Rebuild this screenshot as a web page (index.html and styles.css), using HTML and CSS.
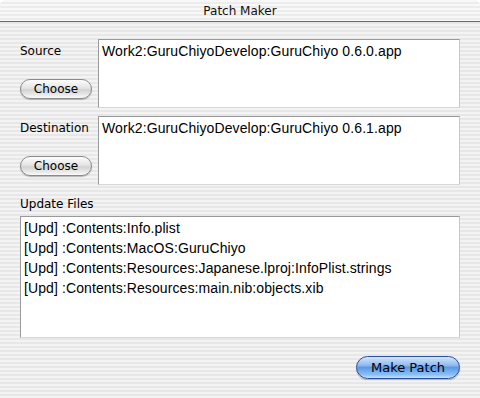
FILE: index.html
```html
<!DOCTYPE html>
<html lang="en">
<head>
    <meta charset="UTF-8">
    <title>Patch Maker</title>
    <link rel="stylesheet" href="styles.css">
</head>
<body>
    <div class="window">
        <div class="titlebar">Patch Maker</div>

        <div class="content">
            <div class="field-row">
                <div class="field-side">
                    <span class="field-label">Source</span>
                    <button class="aqua-button">Choose</button>
                </div>
                <div class="path-box">Work2:GuruChiyoDevelop:GuruChiyo 0.6.0.app</div>
            </div>

            <div class="field-row">
                <div class="field-side">
                    <span class="field-label">Destination</span>
                    <button class="aqua-button">Choose</button>
                </div>
                <div class="path-box">Work2:GuruChiyoDevelop:GuruChiyo 0.6.1.app</div>
            </div>

            <div class="section-label">Update Files</div>
            <ul class="file-list">
                <li>[Upd] :Contents:Info.plist</li>
                <li>[Upd] :Contents:MacOS:GuruChiyo</li>
                <li>[Upd] :Contents:Resources:Japanese.lproj:InfoPlist.strings</li>
                <li>[Upd] :Contents:Resources:main.nib:objects.xib</li>
            </ul>

            <div class="actions">
                <button class="aqua-button default">Make Patch</button>
            </div>
        </div>
    </div>
</body>
</html>
```

FILE: styles.css
```css
body {
    margin: 0;
    font-family: "DejaVu Sans", sans-serif;
    font-size: 12px;
    color: #000;
}

.window {
    width: 480px;
    height: 398px;
    background: repeating-linear-gradient(to bottom, #f3f3f3 0, #f3f3f3 2px, #e7e7e7 2px, #e7e7e7 4px);
    border-radius: 6px 6px 0 0;
    overflow: hidden;
}

.titlebar {
    height: 21px;
    line-height: 22px;
    text-align: center;
    color: #111;
    background: repeating-linear-gradient(to bottom, #f8f8f8 0, #f8f8f8 2px, #ececec 2px, #ececec 4px);
    border-bottom: 1px solid #6b6b6b;
}

.content {
    padding: 17px 20px 0 20px;
}

.field-row {
    display: grid;
    grid-template-columns: 78px 1fr;
    height: 69px;
    margin-bottom: 8px;
}

.field-side {
    display: flex;
    flex-direction: column;
    align-items: flex-start;
}

.field-label {
    margin-top: 5px;
    line-height: 15px;
}

.path-box {
    background: #fff;
    border: 1px solid #9a9a9a;
    border-right-color: #c8c8c8;
    border-bottom-color: #d8d8d8;
    padding: 2px 3px;
    font-family: "Liberation Sans", Arial, sans-serif;
    font-size: 14px;
    line-height: 18px;
    letter-spacing: 0.1px;
}

.aqua-button {
    font-family: "DejaVu Sans", sans-serif;
    font-size: 12px;
    color: #000;
    height: 20px;
    width: 72px;
    padding: 0;
    margin-top: 20px;
    border: 1px solid #8a8a8a;
    border-radius: 10px;
    background: linear-gradient(to bottom, #fdfdfd 0%, #e4e4e4 45%, #d2d2d2 55%, #f0f0f0 90%, #fafafa 100%);
    box-shadow: 0 1px 1px rgba(0, 0, 0, 0.25);
    cursor: pointer;
}

.section-label {
    margin-top: 12px;
    line-height: 15px;
}

.file-list {
    list-style: none;
    margin: 4px 0 0 0;
    padding: 1px 0 0 3px;
    height: 119px;
    background: #fff;
    border: 1px solid #9a9a9a;
    border-right-color: #c8c8c8;
    border-bottom-color: #d8d8d8;
    font-family: "Liberation Sans", Arial, sans-serif;
    font-size: 14px;
    letter-spacing: 0.1px;
}

.file-list li {
    height: 20px;
    line-height: 20px;
}

.actions {
    display: flex;
    justify-content: flex-end;
    margin-top: 18px;
}

.aqua-button.default {
    width: 104px;
    height: 23px;
    margin-top: 0;
    font-size: 13px;
    border-color: #2b4f9c;
    border-radius: 12px;
    background: linear-gradient(to bottom, #d4e6fb 0%, #8fb9ef 40%, #5d98e6 50%, #8cc0f5 85%, #c4e2fd 100%);
}
```
